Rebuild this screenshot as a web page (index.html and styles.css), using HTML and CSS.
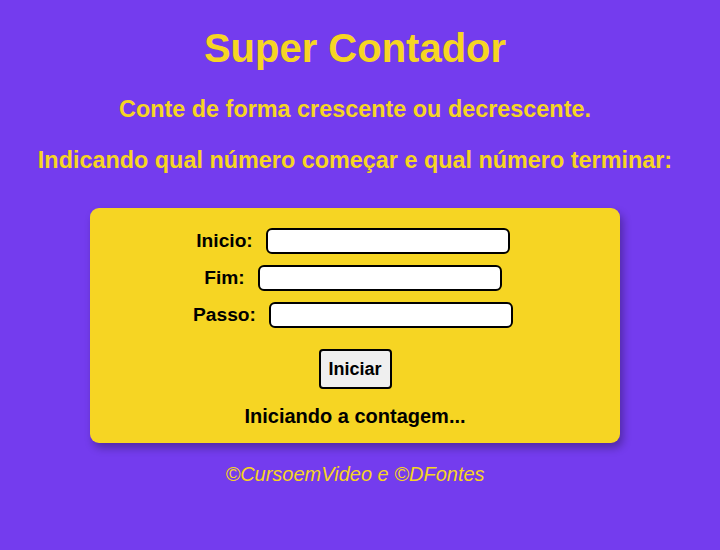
FILE: index.html
```html
<!DOCTYPE html>
<html lang="pt-BR">
<head>
<meta charset="utf-8">
<title>Super Contador</title>
<link rel="stylesheet" href="styles.css">
</head>
<body>
<header class="head">
  <h1 class="title">Super Contador</h1>
  <p class="lead">Conte de forma crescente ou decrescente.</p>
  <p class="lead lead-2">Indicando qual número começar e qual número terminar:</p>
</header>
<main class="card">
  <div class="row"><label for="inicio">Inicio:</label><input id="inicio" class="field" type="number"></div>
  <div class="row"><label for="fim">Fim:</label><input id="fim" class="field" type="number"></div>
  <div class="row"><label for="passo">Passo:</label><input id="passo" class="field" type="number"></div>
  <div class="actions"><button class="btn" type="button">Iniciar</button></div>
  <div class="result">Iniciando a contagem...</div>
</main>
<footer class="foot">©CursoemVideo e ©DFontes</footer>
</body>
</html>
```
FILE: styles.css
```css
html, body {
  margin: 0;
  padding: 0;
}
body {
  background: #743cee;
  font-family: "Liberation Sans", Arial, sans-serif;
  color: #f6d523;
  padding: 25px 10px 0 0;
}
.head {
  text-align: center;
}
.title {
  font-size: 40px;
  font-weight: bold;
  margin: 0;
  line-height: 46px;
}
.lead {
  font-size: 23.4px;
  font-weight: bold;
  margin: 25px 0 0;
  line-height: 27px;
}
.lead-2 {
  margin-top: 24px;
}
.card {
  width: 530px;
  margin: 34px auto 0;
  box-sizing: border-box;
  background: #f6d523;
  border-radius: 9px;
  box-shadow: 3px 5px 8px rgba(0, 0, 0, 0.3);
  padding: 20px 0 15px;
  color: #000;
  display: flex;
  flex-direction: column;
  align-items: center;
}
.row {
  display: flex;
  align-items: center;
  gap: 13px;
  font-size: 19.2px;
  font-weight: bold;
  margin-bottom: 11px;
  margin-left: -4px;
}
.field {
  width: 244px;
  height: 26px;
  box-sizing: border-box;
  border: 2px solid #000;
  border-radius: 6px;
  background: #fff;
  padding: 0 4px;
  margin: 0;
}
.actions {
  margin-top: 10px;
}
.btn {
  width: 73px;
  height: 40px;
  box-sizing: border-box;
  border: 2px solid #000;
  border-radius: 4px;
  background: #efefef;
  font-family: "Liberation Sans", Arial, sans-serif;
  font-size: 18px;
  font-weight: bold;
  color: #000;
  padding: 0;
}
.result {
  font-size: 20px;
  font-weight: bold;
  margin-top: 16px;
  line-height: 23px;
}
.foot {
  text-align: center;
  font-size: 20px;
  font-style: italic;
  margin-top: 20px;
  line-height: 23px;
}
```
